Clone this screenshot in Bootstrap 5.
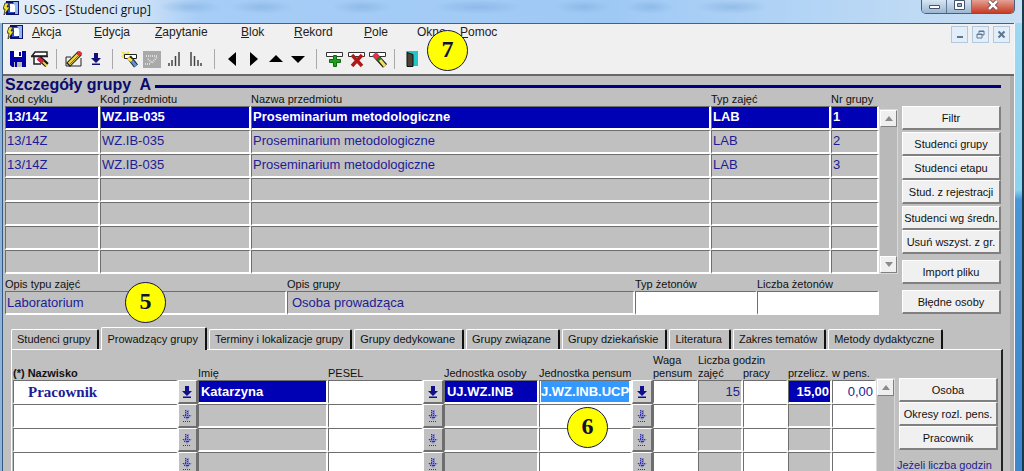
<!DOCTYPE html>
<html lang="pl">
<head>
<meta charset="utf-8">
<meta name="viewport" content="width=device-width, initial-scale=1">
<title>USOS - [Studenci grup]</title>
<link href="https://cdn.jsdelivr.net/npm/bootstrap@5.3.0/dist/css/bootstrap.min.css" rel="stylesheet">
<style>
body{font:11px/14px "Liberation Sans",Arial,sans-serif;color:#111;background:#123c50}
button,input{font-family:inherit}
.shell{padding:0 10px 0 3px;background:linear-gradient(90deg,#8fb4dc 0 2px,#33577f 2px 3px,transparent 3px calc(100% - 10px),#f4f8fb calc(100% - 10px) calc(100% - 9px),transparent calc(100% - 9px) calc(100% - 2px),#173a4c calc(100% - 2px)),linear-gradient(#9fd8f2,#8cd3f0 190px,#4a94d8 200px,#3f86cc)}
.titlebar{height:23px;margin:0 -8px 0 -3px;padding-left:7px;font:12px/20px "Open Sans","Noto Sans",sans-serif;background:
 radial-gradient(32px 7px at 190px 7px,#7fabdc88,transparent),radial-gradient(32px 7px at 262px 7px,#7fabdc88,transparent),radial-gradient(30px 7px at 362px 7px,#7fabdc88,transparent),radial-gradient(45px 7px at 478px 7px,#7fabdc88,transparent),radial-gradient(28px 7px at 583px 7px,#7fabdc88,transparent),radial-gradient(24px 7px at 650px 7px,#7fabdc88,transparent),radial-gradient(36px 7px at 732px 7px,#7fabdc88,transparent),
 linear-gradient(90deg,#e4eef8,#d5e5f6 130px,#a6cdf6 200px,#9fc9f5 60%,#b4d5f5 80%,#c9dff3)}
.titlebar svg{flex:none}
.caption-keys{margin-right:7px;height:14px;border:1px solid #47607c;border-top:0;border-radius:0 0 5px 5px;overflow:hidden}
.caption-keys button{width:25px;border:0;border-right:1px solid #5d7896;background:linear-gradient(#d6e5f4,#9cb6d2);padding:0;display:flex;justify-content:center}
.caption-keys .shut{width:42px;border-right:0;background:linear-gradient(#e4a196,#c63b22)}
.bars{background:#f0f0f0;border-top:1px solid #4a6075;border-bottom:2px solid #686868}
.menu{display:grid;grid-template-columns:62px 61px 86px 53px 70px 53px 43px 50px;font-size:12px;line-height:16px}
.menu a{color:#222;text-decoration:none}
.menu u{text-underline-offset:1px}
.mdi{margin-top:2px}
.mdi button{width:17px;height:17px;padding:0;border:1px solid #b4c8dc;background:#e2eefa;display:flex;align-items:center;justify-content:center}
.tools{padding:1px 0 3px 4px}
.tool{width:22px;height:24px;border:0;background:none;padding:0;display:flex;align-items:center;justify-content:center}
.sep{width:1px;height:20px;margin:0 6px 0 5px;background:#a9a9a9}
.sep.wide{margin:0 6px 0 7px}
.work{background:#c0c0c0;border-right:4px solid #adadad;padding:1px 9px 0 2px}
.heading{font-size:16px;line-height:16px;font-weight:bold;color:#0b0b6e;margin:0;white-space:pre}
.rule{height:3px;background:#000080;margin-top:8px}
.side{width:99px}
.side.upper{padding-top:13px}
.bar-scroll{width:19px;background:#b9b9b9;border:1px solid #d8d8d8;display:flex;flex-direction:column;justify-content:space-between}
.bar-scroll button{width:17px;height:17px;background:#efefef;border:1px solid;border-color:#fff #808080 #808080 #fff;padding:0;display:flex;align-items:center;justify-content:center}
.sheet{width:100%;table-layout:fixed;border-collapse:separate;border-spacing:0}
.sheet th{font-weight:normal;padding:0;height:13px;line-height:13px;white-space:nowrap;overflow:visible;text-align:left}
.sheet td{height:24px;padding:0 0 0 1px;line-height:20px;vertical-align:top;white-space:nowrap}
.cellbox{border:solid;border-width:1px 2px 2px 1px;border-color:#6e6e6e #fff #fff #6e6e6e}
.blue{font-size:13px;color:#1c1c94}
.pick{font-weight:bold}
.sheet .pick td,.sheet td.pick{background:#0000b4;color:#fff}
.form-control{border-radius:0;border:0;background:transparent;padding:0 1px;font-size:13px;line-height:19px;height:21px;min-height:0;color:#1c1c94}
.form-control.light{color:#fff;font-weight:bold;padding-left:2px}
.form-control.cellbox{height:24px;border:solid;border-width:1px 2px 2px 1px;border-color:#6e6e6e #fff #fff #6e6e6e}
.cellbox.white,td.white{background:#fff}
.form-control.serif{font-family:"Liberation Serif",serif;font-weight:bold;font-size:15px;padding:2px 0 0 14px}
.form-control.marked{background:#3399ff;background-clip:content-box;color:#fff;font-weight:bold}
.key{height:24px;font-size:11px;line-height:14px;padding:0;border-radius:0;background:#f0f0f0;color:#111;border:solid;border-width:1px 2px 2px 1px;border-color:#fff #808080 #808080 #fff;white-space:nowrap}
.key:hover{background:#f8f8f8;color:#111}
.gap-after{margin-bottom:2px}
.gap-before{margin-top:6px}
.fields{display:grid;grid-template-columns:282px minmax(0,1fr) 122px 122px;margin-right:19px;padding-top:3px}
.fields label{display:block}
.dot{position:absolute;width:41px;height:41px;border-radius:50%;border:1px solid #14144a;background:#ff0;color:#10103c;font:bold 24px/36px "Liberation Serif",serif;text-align:center;z-index:3}
.nav-tabs{margin:12px 0 0 6px;border:0;flex-wrap:nowrap;align-items:flex-end;gap:2px}
.nav-tabs .nav-link{margin:0;height:20px;border-radius:2px 2px 0 0;border:solid;border-width:1px 2px 0 1px;border-color:#fff #111 #fff #fff;color:#111;padding:0 7px 0 5px;font-size:11px;line-height:19px;background:#c0c0c0;white-space:nowrap}
.nav-tabs .nav-link:hover{border-color:#fff #111 #fff #fff}
.nav-tabs .nav-link.active{height:23px;line-height:22px;margin-bottom:-1px;background:#c0c0c0;color:#111;border-color:#fff #111 #fff #fff}
.panel{margin-left:6px;margin-right:-2px;border:solid;border-width:1px 2px 0 1px;border-color:#fff #222 #fff #fff;padding:4px 3px 0 1px}
.lov{width:100%;height:24px;border:solid;border-width:1px 2px 2px 1px;border-color:#fff #6e6e6e #6e6e6e #fff;background:#c0c0c0;padding:0;display:flex;align-items:center;justify-content:center;color:#8080b8}
.lov.on{color:#10108c;background:#d0d0d0}
.sheet td.slot{padding:0}
.note{color:#1c1c94;margin:4px 0 0 -2px;white-space:nowrap}
</style>
</head>
<body>
<svg class="d-none">
 <symbol id="app" viewBox="0 0 17 16"><path fill="#10106c" d="M3 1h13v14H3z"/><path fill="#2855c4" d="M5 3h6v10H5z"/><path fill="#fff" d="M7 4h5v8H7z"/><path fill="#8cb9ef" d="M10 2h5v12h-3V6z"/><path fill="#f3e42a" stroke="#111" stroke-width=".7" d="M2 3h4L4 7h3L1 15l1-6H0z"/></symbol>
 <symbol id="down" viewBox="0 0 10 12"><path fill="currentColor" d="M3 0h4v5h3L5 10 0 5h3zM1 10.500h8V12H1z"/></symbol>
 <symbol id="downsoft" viewBox="0 0 10 12"><path fill="#8c8cc4" d="M3 0h4v5h3L5 10 0 5h3z"/><path fill="none" stroke="#3030a0" stroke-dasharray="1 1" d="M3.500 0v6M5.500 1v8M1 5.500h8M2 7.500h6M1 11.500h8"/></symbol>
 <symbol id="up3" viewBox="0 0 8 5"><path fill="#8b8b8b" d="M0 5l4-5 4 5z"/></symbol>
 <symbol id="dn3" viewBox="0 0 8 5"><path fill="#8b8b8b" d="M0 0l4 5 4-5z"/></symbol>
</svg>
<div class="shell vh-100 overflow-hidden d-flex flex-column">
 <header class="titlebar d-flex align-items-start flex-shrink-0">
  <svg width="17" height="16" style="margin-left:-4px"><use href="#app"/></svg>
  <span class="ms-1 flex-grow-1">USOS - [Studenci grup]</span>
  <div class="caption-keys d-flex">
   <button aria-label="Minimalizuj"><svg width="13" height="11"><path d="M1.500 5.500h10v3h-10z" fill="#fff" stroke="#46536a"/></svg></button>
   <button aria-label="Maksymalizuj"><svg width="13" height="11"><path d="M1.500.5h10v9h-10z" fill="#fff" stroke="#46536a"/><path d="M4.500 3.500h4v3h-4z" fill="#9cb6d2" stroke="#46536a"/></svg></button>
   <button class="shut" aria-label="Zamknij"><svg width="13" height="11"><path d="M2 1l8 8M10 1L2 9" stroke="#603038" stroke-width="4"/><path d="M2 1l8 8M10 1L2 9" stroke="#fff" stroke-width="2.500"/></svg></button>
  </div>
 </header>
 <div class="bars position-relative flex-shrink-0">
  <div class="d-flex align-items-start">
   <svg width="17" height="16" class="ms-1"><use href="#app"/></svg>
   <nav class="menu ms-2 flex-grow-1">
    <a href="#"><u>A</u>kcja</a><a href="#"><u>E</u>dycja</a><a href="#"><u>Z</u>apytanie</a><a href="#"><u>B</u>lok</a><a href="#"><u>R</u>ekord</a><a href="#"><u>P</u>ole</a><a href="#">Okno</a><a href="#"><u>P</u>omoc</a>
   </nav>
   <div class="mdi d-flex gap-1 me-1">
    <button aria-label="Minimalizuj okno"><svg width="9" height="9"><path d="M2 7h6" stroke="#5f7590" stroke-width="2"/></svg></button>
    <button aria-label="Przywróć okno"><svg width="9" height="9" fill="none" stroke="#5f7590"><path d="M3 3V1h5v4H6M1 4h5v4H1zM1 4.500h5M3 1.500h5"/></svg></button>
    <button aria-label="Zamknij okno"><svg width="9" height="9"><path d="M1.500 1.500l6 6M7.500 1.500l-6 6" stroke="#5f7590" stroke-width="2"/></svg></button>
   </div>
  </div>
  <div class="tools d-flex align-items-center pt-1">
   <button class="tool" aria-label="Zapisz"><svg width="16" height="16"><path fill="#0000a8" d="M0 0h16v16H2l-2-2z"/><path fill="#fff" d="M4 0h8v6H4z"/><path fill="#bbb" d="M4 9h8v7H4z"/><path fill="#0000a8" d="M4 9h8v2H7v5H5v-5H4zM9 1h2v4H9z"/></svg></button>
   <button class="tool" aria-label="Podgląd"><svg width="18" height="16"><path fill="#fff" stroke="#222" stroke-width="1.500" d="M1 5l3-4h12v4zM3 5v8h7"/><path stroke="#222" stroke-width="1.500" d="M0 5.500h17"/><path stroke="#111" stroke-width="5" d="M8 7l8 7"/><path stroke="#cf2440" stroke-width="4" d="M7 7l5 4"/><path stroke="#e8d84a" stroke-width="2" d="M12 11l4 4"/></svg></button>
   <span class="sep"></span>
   <button class="tool" aria-label="Edytuj"><svg width="18" height="16"><path fill="none" stroke="#222" d="M1 6v9h15V7M1 6h5"/><path stroke="#222" stroke-width="5.500" d="M3 14L15 2"/><path stroke="#eed53e" stroke-width="3.500" d="M4 13l9-9"/><path stroke="#3a8a3a" stroke-width="1" d="M5 13l8-8"/><path stroke="#e02c3c" stroke-width="4" d="M13 4l3-3"/></svg></button>
   <button class="tool" aria-label="Lista wartości" style="color:#10107c"><svg width="10" height="12"><use href="#down"/></svg></button>
   <span class="sep"></span>
   <button class="tool" aria-label="Zapytanie"><svg width="18" height="17"><path fill="#f4e63c" d="M0 0l5 2 3-2v3l-5 4-3-1 2-3z"/><path fill="#fff" stroke="#222" d="M3.500 3.500h12v4h-12z"/><path stroke="#222" stroke-width="5" d="M8 6l7 9"/><path stroke="#f4e63c" stroke-width="3" d="M7 7l4 3"/><path stroke="#5a93d8" stroke-width="3" d="M11 10l4 5"/></svg></button>
   <button class="tool" aria-label="Wykonaj" disabled><svg width="18" height="17"><path fill="#a9a9a9" d="M0 0h18v17H0z"/><path stroke="#ddd" stroke-dasharray="1 1" stroke-width="2" fill="none" d="M3 5h12M5 8l4 4 5-6M2 13h5"/></svg></button>
   <button class="tool" aria-label="Sortuj rosnąco"><svg width="12" height="14"><path stroke="#444" stroke-width="1.500" d="M1 11v3M4 8v6M7.500 4v10M11 0v14"/></svg></button>
   <button class="tool" aria-label="Sortuj malejąco"><svg width="12" height="14"><path stroke="#444" stroke-width="1.500" d="M1 0v14M4.500 4v10M8 8v6M11 11v3"/></svg></button>
   <span class="sep wide"></span>
   <button class="tool" aria-label="Poprzedni"><svg width="8" height="14"><path d="M8 0v14L0 7z"/></svg></button>
   <button class="tool" aria-label="Następny"><svg width="8" height="14"><path d="M0 0v14l8-7z"/></svg></button>
   <button class="tool" aria-label="W górę"><svg width="14" height="8"><path d="M0 7l7-7 7 7z"/></svg></button>
   <button class="tool" aria-label="W dół"><svg width="14" height="8"><path d="M0 1l7 7 7-7z"/></svg></button>
   <span class="sep wide"></span>
   <button class="tool" aria-label="Wstaw rekord"><svg width="17" height="16"><path fill="#fff" stroke="#333" d="M.5 1.500h16v4H.5z"/><path fill="#1ea01e" stroke="#0c6c0c" d="M7.500 4.500h3v4h4v3h-4v4h-3v-4h-4v-3h4z"/></svg></button>
   <button class="tool" aria-label="Usuń rekord"><svg width="17" height="16"><path fill="#fff" stroke="#333" d="M.5 1.500h16v4H.5z"/><path stroke="#b01818" stroke-width="3.500" d="M4 4l10 11M14 4L4 15"/></svg></button>
   <button class="tool" aria-label="Wyczyść rekord"><svg width="18" height="17"><path fill="#fff" stroke="#333" d="M.5 1.500h16v4H.5z"/><path stroke="#222" stroke-width="5.500" d="M6 4l10 11"/><path stroke="#e0344c" stroke-width="5" d="M5 3l4 4"/><path stroke="#287828" stroke-width="4" d="M9 7l2 2"/><path stroke="#f0e05c" stroke-width="3" d="M11 9l5 6"/></svg></button>
   <span class="sep"></span>
   <button class="tool" aria-label="Wyjście"><svg width="13" height="16"><path fill="#1fc8c8" d="M0 0h12v15H7V3H1z"/><path fill="#4b4333" stroke="#111" d="M1 1.500l6 2v12H1z"/></svg></button>
  </div>
  <span class="dot" style="left:424px;top:6px">7</span>
 </div>
 <main class="work flex-grow-1 overflow-hidden">
  <div class="d-flex align-items-start">
   <h1 class="heading">Szczegóły grupy  A</h1><div class="rule flex-grow-1 ms-1 me-n1"></div>
  </div>
  <div class="d-flex">
   <div class="flex-grow-1">
    <div class="d-flex">
     <table class="sheet">
      <colgroup><col style="width:95px"><col style="width:151px"><col><col style="width:120px"><col style="width:48px"></colgroup>
      <thead><tr><th>Kod cyklu</th><th>Kod przedmiotu</th><th>Nazwa przedmiotu</th><th>Typ zajęć</th><th>Nr grupy</th></tr></thead>
      <tbody class="blue">
       <tr class="pick"><td class="cellbox">13/14Z</td><td class="cellbox">WZ.IB-035</td><td class="cellbox">Proseminarium metodologiczne</td><td class="cellbox">LAB</td><td class="cellbox">1</td></tr>
       <tr><td class="cellbox">13/14Z</td><td class="cellbox">WZ.IB-035</td><td class="cellbox">Proseminarium metodologiczne</td><td class="cellbox">LAB</td><td class="cellbox">2</td></tr>
       <tr><td class="cellbox">13/14Z</td><td class="cellbox">WZ.IB-035</td><td class="cellbox">Proseminarium metodologiczne</td><td class="cellbox">LAB</td><td class="cellbox">3</td></tr>
       <tr><td class="cellbox"></td><td class="cellbox"></td><td class="cellbox"></td><td class="cellbox"></td><td class="cellbox"></td></tr>
       <tr><td class="cellbox"></td><td class="cellbox"></td><td class="cellbox"></td><td class="cellbox"></td><td class="cellbox"></td></tr>
       <tr><td class="cellbox"></td><td class="cellbox"></td><td class="cellbox"></td><td class="cellbox"></td><td class="cellbox"></td></tr>
       <tr><td class="cellbox"></td><td class="cellbox"></td><td class="cellbox"></td><td class="cellbox"></td><td class="cellbox"></td></tr>
      </tbody>
     </table>
     <div class="d-flex pt-3"><div class="bar-scroll flex-shrink-0 mt-n1"><button aria-label="Przewiń w górę"><svg width="8" height="5"><use href="#up3"/></svg></button><button aria-label="Przewiń w dół"><svg width="8" height="5"><use href="#dn3"/></svg></button></div></div>
    </div>
    <div class="fields">
     <div class="position-relative"><label for="f1">Opis typu zajęć</label><input id="f1" class="form-control cellbox" value="Laboratorium" readonly><span class="dot" style="left:120px;top:5px">5</span></div>
     <div><label for="f2">Opis grupy</label><input id="f2" class="form-control cellbox ps-1" value="Osoba prowadząca" readonly></div>
     <div><label for="f3">Typ żetonów</label><input id="f3" class="form-control cellbox white"></div>
     <div><label for="f4">Liczba żetonów</label><input id="f4" class="form-control cellbox white"></div>
    </div>
   </div>
   <div class="side upper flex-shrink-0 ms-1 d-flex flex-column">
    <button class="btn key gap-after">Filtr</button><button class="btn key">Studenci grupy</button><button class="btn key">Studenci etapu</button><button class="btn key gap-after">Stud. z rejestracji</button><button class="btn key">Studenci wg średn.</button><button class="btn key">Usuń wszyst. z gr.</button><button class="btn key gap-before">Import pliku</button><button class="btn key gap-before">Błędne osoby</button>
   </div>
  </div>
  <ul class="nav nav-tabs">
   <li><button class="nav-link">Studenci grupy</button></li><li><button class="nav-link active">Prowadzący grupy</button></li><li><button class="nav-link">Terminy i lokalizacje grupy</button></li><li><button class="nav-link">Grupy dedykowane</button></li><li><button class="nav-link">Grupy związane</button></li><li><button class="nav-link">Grupy dziekańskie</button></li><li><button class="nav-link">Literatura</button></li><li><button class="nav-link">Zakres tematów</button></li><li><button class="nav-link">Metody dydaktyczne</button></li>
  </ul>
  <section class="panel d-flex">
   <table class="sheet" id="staff">
    <colgroup><col><col style="width:20px"><col style="width:130px"><col style="width:95px"><col style="width:21px"><col style="width:95px"><col style="width:93px"><col style="width:21px"><col style="width:45px"><col style="width:45px"><col style="width:45px"><col style="width:44px"><col style="width:44px"></colgroup>
    <thead>
     <tr><th colspan="8"></th><th>Waga</th><th colspan="4">Liczba godzin</th></tr>
     <tr><th class="fw-bold" colspan="2">(*) Nazwisko</th><th>Imię</th><th colspan="2">PESEL</th><th>Jednostka osoby</th><th colspan="2">Jednostka pensum</th><th>pensum</th><th>zajęć</th><th>pracy</th><th>przelicz.</th><th>w pens.</th></tr>
    </thead>
    <tbody>
     <tr>
      <td class="cellbox white slot"><input class="form-control serif" aria-label="Nazwisko" value="Pracownik"></td>
      <td class="slot"><button class="lov on" aria-label="Lista nazwisk"><svg width="10" height="12"><use href="#down"/></svg></button></td>
      <td class="cellbox pick slot"><input class="form-control light" aria-label="Imię" value="Katarzyna"></td>
      <td class="cellbox white slot"><input class="form-control" aria-label="PESEL"></td>
      <td class="slot"><button class="lov on" aria-label="Lista osób"><svg width="10" height="12"><use href="#down"/></svg></button></td>
      <td class="cellbox pick slot"><input class="form-control light" aria-label="Jednostka osoby" value="UJ.WZ.INB"></td>
      <td class="cellbox white slot position-relative"><input class="form-control marked" aria-label="Jednostka pensum" value="J.WZ.INB.UCP"><span class="dot" style="left:27px;top:26px">6</span></td>
      <td class="slot"><button class="lov on" aria-label="Lista jednostek"><svg width="10" height="12"><use href="#down"/></svg></button></td>
      <td class="cellbox white slot"><input class="form-control" aria-label="Waga pensum"></td>
      <td class="cellbox slot"><input class="form-control text-end" aria-label="Liczba godzin zajęć" value="15"></td>
      <td class="cellbox white slot"><input class="form-control" aria-label="Liczba godzin pracy"></td>
      <td class="cellbox pick slot"><input class="form-control light text-end" aria-label="Godziny przeliczeniowe" value="15,00"></td>
      <td class="cellbox white slot"><input class="form-control text-end" aria-label="Godziny w pensum" value="0,00"></td>
     </tr>
    </tbody>
   </table>
   <template id="blank"><tr>
    <td class="cellbox white slot"><input class="form-control" aria-label="Nazwisko"></td>
    <td class="slot"><button class="lov" aria-label="Lista nazwisk"><svg width="10" height="12"><use href="#downsoft"/></svg></button></td>
    <td class="cellbox"></td>
    <td class="cellbox white slot"><input class="form-control" aria-label="PESEL"></td>
    <td class="slot"><button class="lov" aria-label="Lista osób"><svg width="10" height="12"><use href="#downsoft"/></svg></button></td>
    <td class="cellbox"></td>
    <td class="cellbox white slot"><input class="form-control" aria-label="Jednostka pensum"></td>
    <td class="slot"><button class="lov" aria-label="Lista jednostek"><svg width="10" height="12"><use href="#downsoft"/></svg></button></td>
    <td class="cellbox white slot"><input class="form-control" aria-label="Waga pensum"></td>
    <td class="cellbox"></td>
    <td class="cellbox white slot"><input class="form-control" aria-label="Liczba godzin pracy"></td>
    <td class="cellbox"></td>
    <td class="cellbox white slot"><input class="form-control" aria-label="Godziny w pensum"></td>
   </tr></template>
   <div class="d-flex flex-shrink-0 pt-4"><div class="bar-scroll"><button aria-label="Przewiń w górę"><svg width="8" height="5"><use href="#up3"/></svg></button></div></div>
   <div class="side flex-shrink-0 d-flex flex-column pt-4 ms-1">
    <button class="btn key">Osoba</button><button class="btn key">Okresy rozl. pens.</button><button class="btn key">Pracownik</button>
    <p class="note pt-1">Jeżeli liczba godzin</p>
   </div>
  </section>
 </main>
</div>
<script>
const rows = document.querySelector('#staff tbody'), blank = document.getElementById('blank');
for (let i = 0; i < 3; i++) rows.append(blank.content.cloneNode(true));
</script>
<script src="https://cdn.jsdelivr.net/npm/bootstrap@5.3.0/dist/js/bootstrap.bundle.min.js"></script>
</body>
</html>
